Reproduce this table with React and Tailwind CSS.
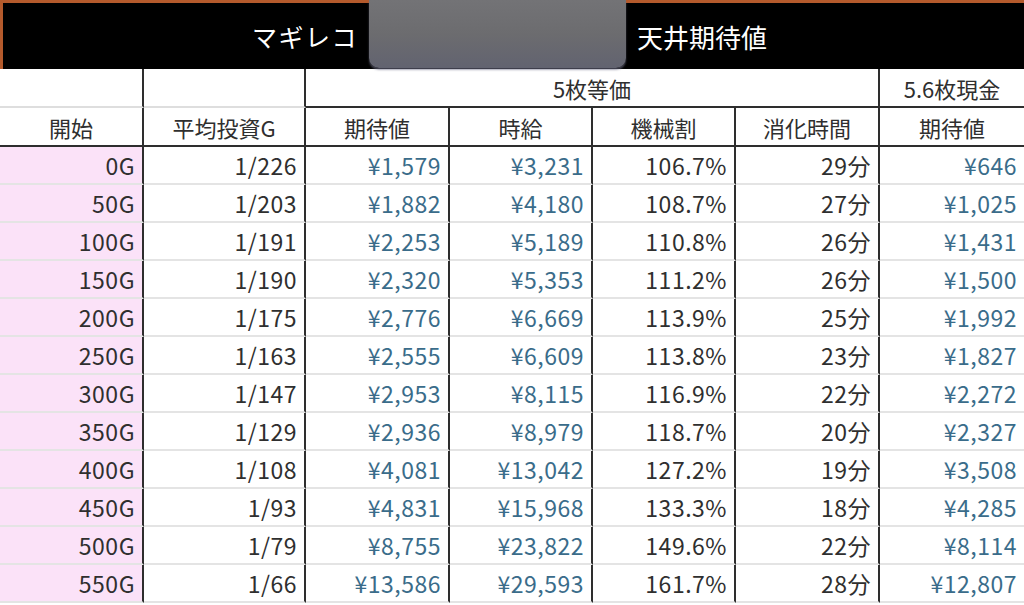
const rows = [
  ["0G", "1/226", "¥1,579", "¥3,231", "106.7%", "29分", "¥646"],
  ["50G", "1/203", "¥1,882", "¥4,180", "108.7%", "27分", "¥1,025"],
  ["100G", "1/191", "¥2,253", "¥5,189", "110.8%", "26分", "¥1,431"],
  ["150G", "1/190", "¥2,320", "¥5,353", "111.2%", "26分", "¥1,500"],
  ["200G", "1/175", "¥2,776", "¥6,669", "113.9%", "25分", "¥1,992"],
  ["250G", "1/163", "¥2,555", "¥6,609", "113.8%", "23分", "¥1,827"],
  ["300G", "1/147", "¥2,953", "¥8,115", "116.9%", "22分", "¥2,272"],
  ["350G", "1/129", "¥2,936", "¥8,979", "118.7%", "20分", "¥2,327"],
  ["400G", "1/108", "¥4,081", "¥13,042", "127.2%", "19分", "¥3,508"],
  ["450G", "1/93", "¥4,831", "¥15,968", "133.3%", "18分", "¥4,285"],
  ["500G", "1/79", "¥8,755", "¥23,822", "149.6%", "22分", "¥8,114"],
  ["550G", "1/66", "¥13,586", "¥29,593", "161.7%", "28分", "¥12,807"],
]

const blueCols = [2, 3, 6]

export default function App() {
  return (
    <div
      className="w-[1024px] h-[605px] overflow-hidden bg-white text-[#2f2f2f]"
      style={{ fontFamily: '"Noto Sans CJK JP", "Noto Sans", sans-serif' }}
    >
      {/* title bar */}
      <div className="relative h-[69px] bg-black border-t-[3px] border-l-[3px] border-[#b45a2c] flex items-center justify-center gap-[11px] pr-[8px]">
        <span className="text-white text-[25px] tracking-[1.5px] pt-[1px]">マギレコ</span>
        <div className="w-[257px] h-[68px] -mt-[3px] self-start rounded-b-[10px] bg-gradient-to-b from-[#737376] via-[#6c6c6f] to-[#626370] shadow-[0_2px_2px_rgba(110,110,135,0.6)]" />
        <span className="text-white text-[26px] pt-[1px]">天井期待値</span>
      </div>

      {/* table */}
      <div className="grid grid-cols-[144px_162px_144px_143px_143px_144px_1fr] text-[22px] leading-none">
        {/* header row 1 */}
        <div className="h-[39px] border-r-2 border-r-[#2e2e2e] border-b-2 border-b-[#dedede]" />
        <div className="h-[39px] border-r-2 border-r-[#2e2e2e] border-b-2 border-b-[#dedede]" />
        <div className="col-span-4 h-[39px] border-r-2 border-b-2 border-[#2e2e2e] flex items-center justify-center">
          5枚等価
        </div>
        <div className="h-[39px] border-b-2 border-[#2e2e2e] flex items-center justify-center">5.6枚現金</div>

        {/* header row 2 */}
        {["開始", "平均投資G", "期待値", "時給", "機械割", "消化時間", "期待値"].map((h, i) => (
          <div
            key={h + i}
            className={
              "h-[39px] border-b-2 border-[#2e2e2e] flex items-center justify-center " +
              (i < 6 ? "border-r-2" : "")
            }
          >
            {h}
          </div>
        ))}

        {/* data rows */}
        {rows.map((r) =>
          r.map((v, i) => (
            <div
              key={r[0] + i}
              className={
                "h-[38px] border-b-2 border-b-[#e4e4e4] flex items-center justify-end pr-[7px] text-[23px] tracking-[0.5px] " +
                (i < 6 ? "border-r-2 border-r-[#2e2e2e] " : "") +
                (i === 0 ? "bg-[#fbe2f8] " : "") +
                (blueCols.includes(i) ? "text-[#3a6c8a]" : "")
              }
            >
              {v}
            </div>
          ))
        )}
      </div>
    </div>
  )
}
